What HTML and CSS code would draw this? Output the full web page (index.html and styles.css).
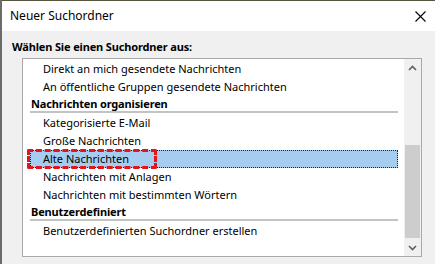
FILE: index.html
```html
<!DOCTYPE html>
<html lang="de">
<head>
    <meta charset="UTF-8">
    <meta name="viewport" content="width=device-width, initial-scale=1.0">
    <title>Neuer Suchordner</title>
    <link rel="stylesheet" href="styles.css">
</head>
<body>
    <div class="dialog">
        <div class="titlebar">
            <span class="title">Neuer Suchordner</span>
            <svg class="close" width="11" height="11" viewBox="0 0 11 11">
                <path d="M0.5 0.5 L10.5 10.5 M10.5 0.5 L0.5 10.5" stroke="#000" stroke-width="1.1" fill="none"/>
            </svg>
        </div>

        <div class="content">
            <div class="prompt">Wählen Sie einen Suchordner aus:</div>

            <div class="listbox">
                <div class="list">
                    <div class="row item">Direkt an mich gesendete Nachrichten</div>
                    <div class="row item">An öffentliche Gruppen gesendete Nachrichten</div>
                    <div class="row group">Nachrichten organisieren</div>
                    <div class="row item">Kategorisierte E-Mail</div>
                    <div class="row item">Große Nachrichten</div>
                    <div class="row item selected">
                        Alte Nachrichten
                        <span class="marker"></span>
                    </div>
                    <div class="row item">Nachrichten mit Anlagen</div>
                    <div class="row item">Nachrichten mit bestimmten Wörtern</div>
                    <div class="row group">Benutzerdefiniert</div>
                    <div class="row item">Benutzerdefinierten Suchordner erstellen</div>
                </div>

                <div class="scrollbar">
                    <div class="arrow">
                        <svg width="9" height="6" viewBox="0 0 9 6">
                            <path d="M1 5 L4.5 1.5 L8 5" stroke="#606060" stroke-width="1.6" fill="none"/>
                        </svg>
                    </div>
                    <div class="track">
                        <div class="thumb"></div>
                    </div>
                    <div class="arrow">
                        <svg width="9" height="6" viewBox="0 0 9 6">
                            <path d="M1 1 L4.5 4.5 L8 1" stroke="#606060" stroke-width="1.6" fill="none"/>
                        </svg>
                    </div>
                </div>
            </div>
        </div>
    </div>
</body>
</html>
```

FILE: styles.css
```css
body {
    margin: 0;
    padding: 0;
    background-color: #6b6b6b;
    font-family: "Noto Sans", "Open Sans", sans-serif;
    font-size: 11px;
    color: #000;
}

.dialog {
    margin-left: 2px;
    width: 433px;
    height: 264px;
    border-top: 1px solid #55543f;
    box-sizing: border-box;
    background-color: #f0f0f0;
    overflow: hidden;
}

.titlebar {
    height: 30px;
    background-color: #fff;
    display: flex;
    align-items: center;
    justify-content: space-between;
    padding: 0 9px 0 8px;
}

.title {
    font-size: 12px;
    margin-top: -1px;
}

.content {
    padding: 8px 0 0 0;
}

.prompt {
    font-weight: bold;
    margin-left: 10px;
    line-height: 15px;
    letter-spacing: -0.15px;
}

.listbox {
    margin: 4px 0 0 20px;
    width: 400px;
    height: 199px;
    box-sizing: border-box;
    border: 1px solid #a9a9a9;
    background-color: #fff;
    display: flex;
}

.list {
    flex: 1;
    padding: 1px 6px 0 7px;
}

.row {
    position: relative;
    white-space: nowrap;
}

.item {
    height: 18px;
    line-height: 18px;
    padding-left: 13px;
}

.group {
    font-weight: bold;
    height: 15px;
    line-height: 15px;
    padding-left: 1px;
    border-bottom: 2px solid #c3c3c3;
    margin-bottom: 1px;
    letter-spacing: -0.15px;
}

.selected {
    background-color: #a6cdf0;
    outline: 1px dotted #222;
    outline-offset: -1px;
}

.marker {
    position: absolute;
    left: -3px;
    top: -1px;
    width: 130px;
    height: 20px;
    box-sizing: border-box;
    border: 3px dashed #e4141b;
    border-radius: 2px;
}

.scrollbar {
    width: 17px;
    background-color: #f0f0f0;
    display: flex;
    flex-direction: column;
}

.arrow {
    height: 17px;
    display: flex;
    align-items: center;
    justify-content: center;
}

.track {
    flex: 1;
    padding: 0 1px;
}

.thumb {
    margin-top: 69px;
    height: 93px;
    background-color: #cdcdcd;
}
```
